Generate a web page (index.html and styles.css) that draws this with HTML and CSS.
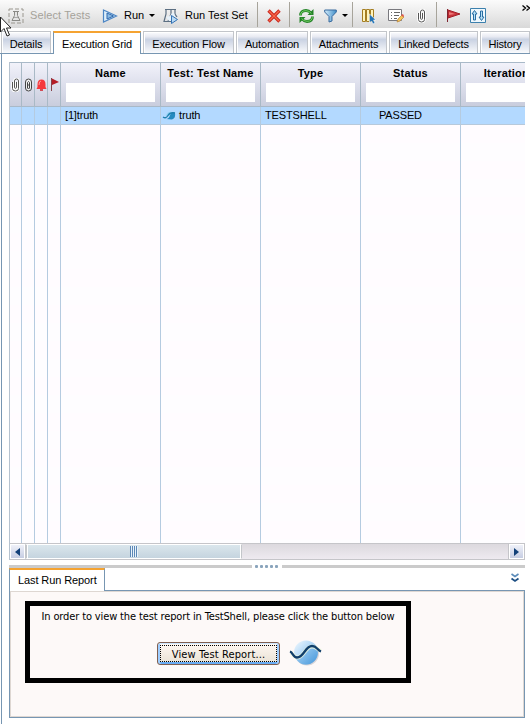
FILE: index.html
```html
<!DOCTYPE html>
<html lang="en">
<head>
<meta charset="utf-8">
<title>Execution Grid</title>
<link rel="stylesheet" href="styles.css">
</head>
<body>
<svg class="defs" width="0" height="0">
  <defs>
    <linearGradient id="ball" x1="0" y1="0" x2="1" y2="1"><stop offset="0" stop-color="#f4fbff"/><stop offset=".5" stop-color="#a9d3f5"/><stop offset="1" stop-color="#3d8fd6"/></linearGradient>
    <linearGradient id="blue" x1="0" y1="0" x2="1" y2="0"><stop offset="0" stop-color="#d4ecfb"/><stop offset="1" stop-color="#3f8ec8"/></linearGradient>
    <symbol id="clip" viewBox="0 0 9 14"><path d="M1.500 4v6.500q0 2.500 3 2.500t3-2.500V3q0-2-2-2t-2 2v6.300q0 1 1 1t1-1V4" fill="none" stroke="#fff" stroke-width="2.600"/><path d="M1.500 4v6.500q0 2.500 3 2.500t3-2.500V3q0-2-2-2t-2 2v6.300q0 1 1 1t1-1V4" fill="none" stroke="#555" stroke-width="1"/></symbol>
    <symbol id="flag" viewBox="0 0 15 13"><path d="M2 1L14 5 2 9z" fill="#c9343b" stroke="#a31f29"/><path d="M3 3l6 2-6 1z" fill="#ee7b7b"/><path d="M1.500 0v13" stroke="#7f2530"/></symbol>
  </defs>
</svg>
<header class="toolbar">
  <svg class="i-select" width="16" height="16" viewBox="0 0 16 16"><rect x="1" y="1" width="14" height="14" fill="none" stroke="#99968e" stroke-dasharray="4 2"/><path d="M5 3.500h6M6.500 3.500v4L4 12.500h8L9.500 7.500v-4" fill="#e4e4e4" stroke="#8a8a86"/><path d="M6 9.500h4" stroke="#aaa"/></svg>
  <span class="t-select">Select Tests</span>
  <svg class="i-run" width="16" height="14" viewBox="0 0 16 14"><path d="M1.500 1L14.500 7l-13 6z" fill="#dceefa" stroke="#4d86c4" stroke-width="1.200"/><path d="M5 4l6.500 3L5 10z" fill="#8bbce5" stroke="#3169ae"/></svg>
  <span class="t-run">Run</span>
  <i class="caret c-run"></i>
  <svg class="i-set" width="16" height="16" viewBox="0 0 16 16"><path d="M2 1.500h5M3 2v4L1 13.500h5M7 1.500h6M8 2v4l-3 7.500h4M12 2v4l2 3" fill="none" stroke="#5c6f82" stroke-width="1.200"/><path d="M3 9l4-1 2-3h2l1 3-3 5H6z" fill="#e6f1fa"/><path d="M8.500 7.500l6 4-6 4z" fill="#b8daf5" stroke="#3573b5"/></svg>
  <span class="t-set">Run Test Set</span>
  <i class="sep s1"></i>
  <svg class="i-x" width="14" height="14" viewBox="0 0 14 14"><path d="M1.500 1.500l11 11M12.500 1.500l-11 11" stroke="#c92920" stroke-width="3.400"/><path d="M2 2l10 10M12 2L2 12" stroke="#fa6647" stroke-width="1.300"/></svg>
  <i class="sep s2"></i>
  <svg class="i-ref" width="17" height="16" viewBox="0 0 17 16"><g fill="none" stroke="#248428" stroke-width="2.800"><path d="M2.500 7.500q0-5 5.500-5 3 0 5 2.500"/><path d="M14.500 8.500q0 5-5.500 5-3 0-5-2.500"/></g><path d="M15.500 1v6H9.500zM1.500 15V9h6z" fill="#248428"/><g fill="none" stroke="#75cf65"><path d="M2.700 7q0-4.300 5.300-4.300 3.500 0 5.500 3"/><path d="M14.300 9q0 4.300-5.300 4.300-3.500 0-5.500-3"/></g></svg>
  <svg class="i-filter" width="13" height="14" viewBox="0 0 13 14"><path d="M.7 1h11.600v2L8 7.500V12l-3 1V7.500L.7 3z" fill="url(#blue)" stroke="#396a9e"/></svg>
  <i class="caret c-filter"></i>
  <i class="sep s3"></i>
  <svg class="i-cols" width="16" height="16" viewBox="0 0 16 16"><path d="M1.500 1.500h3v12h-3zM5.500 1.500h3v12h-3zM9.500 1.500h3v12h-3z" fill="#fff5bd" stroke="#a57e22"/><path d="M8.500 6v9l2-2 1.500 3 2-1-1.500-3H15z" fill="#2674b5" stroke="#fff" stroke-width=".6"/></svg>
  <svg class="i-note" width="16" height="16" viewBox="0 0 16 16"><path d="M.5 1.500h13v11H.5z" fill="#fff" stroke="#79797e"/><path d="M3 4.500h1M6 4.500h6M3 7.500h1M6 7.500h5M3 10.500h1M6 10.500h3" stroke="#666"/><path d="M9 14l1-3 4-4 2 2-4 4z" fill="#f3c75c" stroke="#b7833b" stroke-width=".7"/><path d="M13 7l2-1 1 2-1 1z" fill="#df554d"/></svg>
  <svg class="i-clip" width="9" height="14"><use href="#clip"/></svg>
  <i class="sep s4"></i>
  <svg class="i-flag" width="15" height="13"><use href="#flag"/></svg>
  <svg class="i-sort" width="16" height="16" viewBox="0 0 16 16"><path d="M.5.5h15v14H.5z" fill="#eff8fd" stroke="#3c80ad"/><path d="M4.500 2.500L7 6H5.500v6h-2V6H2zM11.500 12.500L9 9h1.500V3h2v6H14z" fill="#b7e0f6" stroke="#286da3"/></svg>
  <svg class="i-more" width="8" height="7" viewBox="0 0 8 7"><path d="M.5.5l3 2.500-3 2.500M4.500.5l3 2.500-3 2.500" fill="none" stroke="#000" stroke-width="1.300"/></svg>
</header>
<nav class="tabs">
  <div class="tab w-details">Details</div>
  <div class="tab active w-grid">Execution Grid</div>
  <div class="tab w-flow">Execution Flow</div>
  <div class="tab w-auto">Automation</div>
  <div class="tab w-att">Attachments</div>
  <div class="tab w-def">Linked Defects</div>
  <div class="tab w-hist">History</div>
</nav>
<main class="page">
  <section class="grid">
    <div class="row head">
      <div class="cell icon"><svg width="9" height="14"><use href="#clip"/></svg></div>
      <div class="cell icon"><svg width="9" height="14" viewBox="0 0 9 14"><rect x="1.500" y="1" width="6" height="12" rx="3" fill="#eee" stroke="#444"/><path d="M3.500 10V4.500q1-2 2 0V10q-1 2-2 0M3 7h3" fill="none" stroke="#444" stroke-width="1"/></svg></div>
      <div class="cell icon"><svg width="11" height="12" viewBox="0 0 11 12"><path d="M5.500.5q4 0 4 5V8l1 2H.5l1-2V5.500q0-5 4-5z" fill="#f5393d"/><path d="M3 6q0-4 2-4" stroke="#ff9a9a" fill="none"/><path d="M4 11h3" stroke="#d11d26" stroke-width="1.500"/></svg></div>
      <div class="cell icon"><svg width="9" height="13" viewBox="0 0 9 13"><path d="M1.500 0v13" stroke="#84424b"/><path d="M2 .5L9 4 2 7z" fill="#b51c27"/></svg></div>
      <div class="cell col"><b>Name</b><i class="field"></i></div>
      <div class="cell col"><b>Test: Test Name</b><i class="field"></i></div>
      <div class="cell col"><b>Type</b><i class="field"></i></div>
      <div class="cell col"><b>Status</b><i class="field"></i></div>
      <div class="cell col"><b>Iterations</b><i class="field"></i></div>
    </div>
    <div class="row data">
      <div class="cell"></div><div class="cell"></div><div class="cell"></div><div class="cell"></div>
      <div class="cell txt">[1]truth</div>
      <div class="cell truth"><svg width="13" height="9" viewBox="0 0 13 9"><path d="M3 8q3 0 4-4t5-2q1 5-3 6.500z" fill="#258ac0"/><path d="M3 5q2-5 6-4L6 5z" fill="#8bd0ef"/><path d="M0 6q3 2 5-1.500T12 2" fill="none" stroke="#207eae" stroke-width="1.300"/></svg>truth</div>
      <div class="cell txt">TESTSHELL</div>
      <div class="cell txt passed">PASSED</div>
      <div class="cell"></div>
    </div>
    <div class="row body">
      <div class="cell"></div><div class="cell"></div><div class="cell"></div><div class="cell"></div><div class="cell"></div><div class="cell"></div><div class="cell"></div><div class="cell"></div><div class="cell"></div>
    </div>
    <div class="scroll">
      <div class="sbtn"><svg width="5" height="8" viewBox="0 0 5 8"><path d="M5 0v8L0 4z" fill="#124078"/></svg></div>
      <div class="thumb"><i class="grip"></i></div>
      <div class="track"></div>
      <div class="sbtn"><svg width="5" height="8" viewBox="0 0 5 8"><path d="M0 0v8l5-4z" fill="#124078"/></svg></div>
    </div>
  </section>
  <div class="splitter"><i class="bar left"></i><i class="dot"></i><i class="dot"></i><i class="dot"></i><i class="dot"></i><i class="dot"></i><i class="bar right"></i></div>
  <div class="subtabs">
    <div class="subtab">Last Run Report</div>
    <svg width="8" height="10" viewBox="0 0 8 10"><path d="M.5 1L4 3.500 7.500 1" fill="none" stroke="#5b8bb9" stroke-width="1.600"/><path d="M.5 5.500L4 8l3.500-2.500" fill="none" stroke="#1d4f83" stroke-width="1.800"/></svg>
  </div>
  <section class="panel">
    <div class="notice">
      <p>In order to view the test report in TestShell, please click the button below</p>
      <div class="actions">
        <button class="report"><span>View Test Report...</span></button>
        <svg width="32" height="26" viewBox="0 0 32 26"><circle cx="17" cy="13.500" r="12" fill="#d8d5d8"/><circle cx="16" cy="12.500" r="12" fill="url(#ball)"/><path d="M5 17c8 4 10-10 16-10q4 0 6.500 3.500Q28 20 20 24 10 27 5 17z" fill="#4f9fdf" opacity=".4"/><path d="M0 12.500c3 0 3 5 7 5C14 17.500 15 6.500 22 6.500c5 0 5 3 9 4.500" fill="none" stroke="#eff7df" stroke-width="4" opacity=".8"/><path d="M0 11.500c3 1 3 6 7 6C14 17.500 15 6 22 6c5 0 5 4 9 5.500" fill="none" stroke="#113f6b" stroke-width="2.300"/></svg>
      </div>
    </div>
  </section>
</main>
<svg class="pointer" width="12" height="22" viewBox="0 0 12 22"><path d="M.5 1v15l3.500-3.500L7 20l2.500-1-3-7H11z" fill="#fff" stroke="#222"/></svg>
</body>
</html>
```
FILE: styles.css
```css
* { box-sizing: border-box; }
body { margin: 0; width: 530px; height: 724px; overflow: hidden; background: #fff; font: 11px/13px "Liberation Sans", Arial, sans-serif; letter-spacing: -.15px; color: #000; }
svg { display: block; flex: none; overflow: visible; }
.defs { position: absolute; }
.toolbar { display: flex; align-items: center; height: 28px; padding: 3px 0 0 8px; white-space: nowrap; background: linear-gradient(#fbfbfb, #ececec 45%, #d9d9d9); }
.toolbar > * { flex: none; }
.t-select { width: 66px; margin-left: 6px; color: #a5a29a; letter-spacing: .1px; }
.i-run { margin-left: 6px; }
.t-run { width: 25px; margin-left: 6px; letter-spacing: 0; }
.caret { border: 3px solid transparent; border-top: 3px solid #000; border-bottom: 0; }
.i-set { margin-left: 8px; }
.t-set { width: 72px; margin-left: 6px; letter-spacing: 0; }
.sep { width: 1px; height: 25px; margin-top: -2px; background: #a7a49b; }
.i-x { margin-left: 9px; }
.s2 { margin-left: 8px; }
.i-ref { margin-left: 8px; }
.i-filter { margin-left: 9px; }
.c-filter { margin-left: 5px; }
.s3 { margin-left: 4px; }
.i-cols { margin-left: 8px; }
.i-note { margin-left: 11px; }
.i-clip { margin-left: 13px; }
.s4 { margin-left: 10px; }
.i-flag { margin-left: 9px; }
.i-sort { margin-left: 9px; }
.i-more { margin: -14px 0 0 36px; }
.tabs { display: flex; gap: 2px; height: 26px; padding-top: 3px; padding-left: 1px; border-bottom: 1px solid #7796b2; }
.tab { flex: none; height: 22px; padding-top: 6px; text-align: center; white-space: nowrap; border: 1px solid #c2c5ca; border-width: 1px 1px 0; background: linear-gradient(#fcfdff, #e8eaf2 22%, #c9d2e3 35%, #dce1ec 60%, #fafbfd); box-shadow: inset 1px 1px #fff; }
.active { height: 23px; border-color: #7796b2; border-top: 2px solid #f5a331; background: #fff; padding-top: 5px; box-shadow: none; }
.w-details { width: 50px; }
.w-grid { width: 88px; }
.w-flow { width: 91px; }
.w-auto { width: 72px; }
.w-att { width: 77px; }
.w-def { width: 89px; }
.w-hist { width: 50px; }
.page { margin-left: 1px; height: 670px; padding: 8px 5px 0 7px; border-left: 1px solid #7796b2; }
.grid { width: 516px; height: 498px; border-left: 1px solid #b5c2cf; overflow: hidden; }
.row { display: grid; grid-template-columns: 12px 13px 13px 13px 100px 100px 100px 100px 64px; width: 515px; }
.cell { border-right: 1px solid #b5cbe0; overflow: hidden; white-space: nowrap; }
.cell:last-child { border-right: 0; }
.head { height: 45px; border: 1px solid #a9b9c8; border-width: 1px 0; background: linear-gradient(#f2f2fa, #dddfec 50%, #c9cddd); }
.head .cell { border-color: #a9b9c6; }
.icon { display: flex; justify-content: center; align-items: center; }
.col { padding: 4px 5px 0; }
.col b { display: block; text-align: center; height: 16px; letter-spacing: .2px; }
.col:last-child b { width: 87px; text-align: center; }
.field { display: block; height: 19px; background: #fff; }
.col:last-child .field { width: 90px; }
.data { height: 18px; background: #b3d9ff; border-bottom: 1px solid #b7c9db; }
.txt { padding: 2px 0 0 4px; }
.passed { padding-left: 18px; }
.truth { display: flex; align-items: center; gap: 3px; padding-left: 2px; }
.body { height: 418px; background: repeating-linear-gradient(#fffcff 0 18px, #fefdff 18px 36px); }
.scroll { display: flex; width: 515px; height: 17px; border: 1px solid #c5c5c9; border-left: 0; background: #fff; }
.sbtn { display: flex; flex: none; align-items: center; justify-content: center; width: 15px; height: 15px; border: 1px solid #fff; background: linear-gradient(#eff1f9, #c6cde2); }
.thumb { display: flex; align-items: center; justify-content: center; width: 217px; border: 1px solid #fff; border-left: 2px solid #c3c6ca; border-right: 1px solid #c3c6ca; box-shadow: inset 1px 0 #fff, inset -1px 0 #fff; background: linear-gradient(#dae6ec, #c5d4df); }
.grip { width: 8px; height: 11px; background: repeating-linear-gradient(90deg, #5c88b7 0 1px, #e9f3fa 1px 2px); }
.track { flex: 1; border-right: 1px solid #c5c5c9; background: linear-gradient(#dcd9de, #eeeaf0); }
.splitter { display: flex; align-items: center; height: 8px; padding-top: 5px; }
.bar { height: 3px; background: #cbcbcb; }
.left { width: 243px; margin-right: 3px; }
.right { width: 244px; margin-left: 2px; }
.dot { width: 3px; height: 3px; margin-right: 2px; border-radius: 1px; background: #8aa4bc; }
.subtabs { display: flex; justify-content: space-between; height: 22px; width: 516px; padding-right: 6px; }
.subtabs svg { margin-top: 5px; }
.subtab { width: 96px; height: 23px; padding: 4px 0 0 8px; border: 1px solid #7796b2; border-top: 2px solid #f5a331; border-bottom: 0; background: #fff; position: relative; letter-spacing: -.1px; }
.panel { width: 516px; height: 128px; padding: 10px 15px; border: 1px solid #7796b2; box-shadow: inset 0 0 0 1px #ded7d2; background: #fdf9f8; }
.notice { width: 386px; height: 82px; border: 5px solid #000; text-align: center; font: 11px/13px "DejaVu Sans Condensed", "DejaVu Sans", sans-serif; font-stretch: condensed; letter-spacing: -.13px; }
.notice p { margin: 4px 0 0; white-space: nowrap; }
.actions { display: flex; align-items: center; gap: 10px; margin: 17px 0 0 127px; height: 26px; }
.report { width: 123px; height: 23px; padding: 2px; border: 1px solid #805f50; border-radius: 3px; background: linear-gradient(#fff8f2, #e9e1d4); box-shadow: inset 0 1px #cde7ff, inset 2px 0 #a0ceff, inset -2px 0 #a0ceff, inset 0 -2px #68acf5; font: inherit; color: #000; letter-spacing: .12px; }
.report span { display: block; height: 17px; border: 1px dotted #000; line-height: 18px; white-space: nowrap; }
.pointer { position: absolute; left: 0; top: 16px; }
```
